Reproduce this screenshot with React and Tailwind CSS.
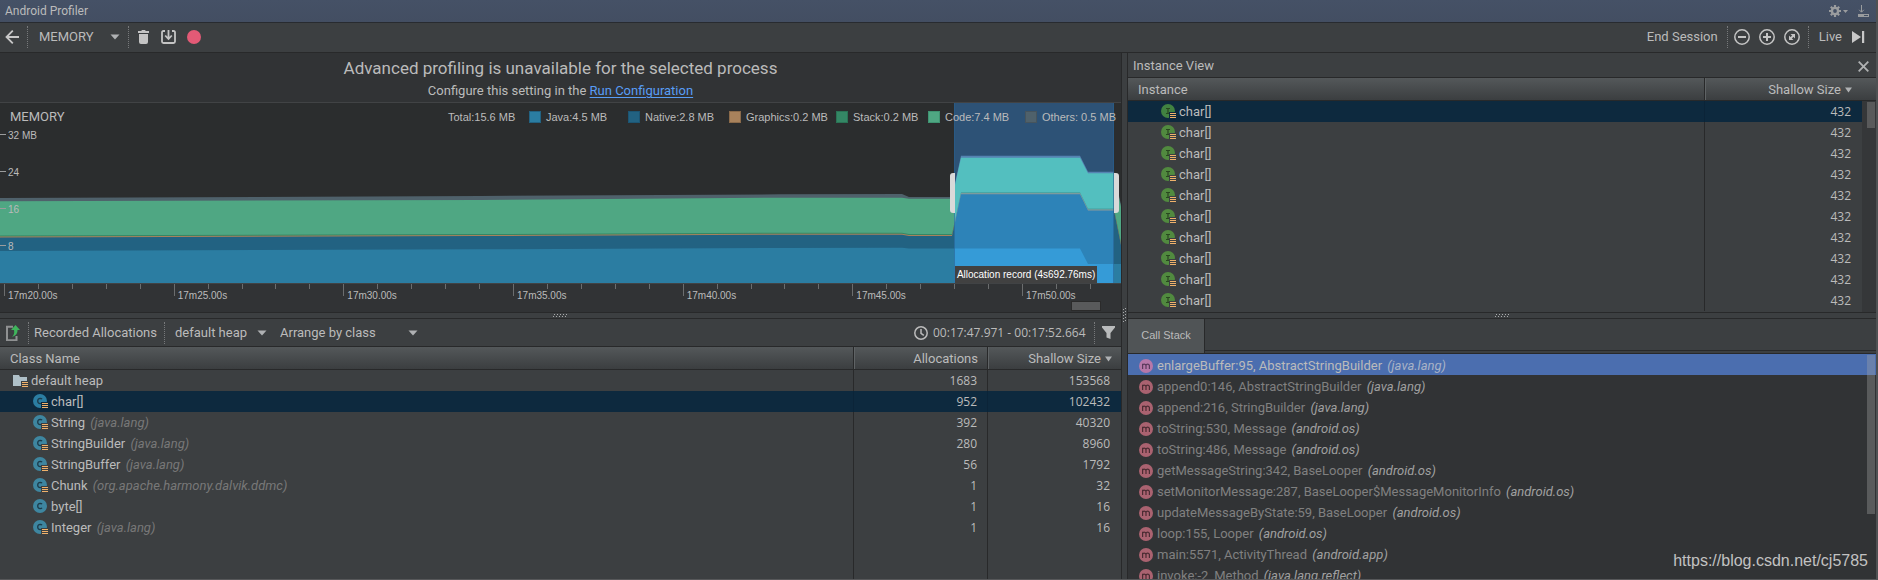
import { useId } from "react";

const HEAP_ROWS = [
  { kind: "heap", name: "default heap", count: 1683, size: 153568 },
  { kind: "class", name: "char[]", count: 952, size: 102432, selected: true, list: true },
  { kind: "class", name: "String", pkg: "(java.lang)", count: 392, size: 40320, list: true },
  { kind: "class", name: "StringBuilder", pkg: "(java.lang)", count: 280, size: 8960, list: true },
  { kind: "class", name: "StringBuffer", pkg: "(java.lang)", count: 56, size: 1792, list: true },
  { kind: "class", name: "Chunk", pkg: "(org.apache.harmony.dalvik.ddmc)", count: 1, size: 32, list: true },
  { kind: "class", name: "byte[]", count: 1, size: 16 },
  { kind: "class", name: "Integer", pkg: "(java.lang)", count: 1, size: 16, list: true },
];

const FRAMES = [
  ["enlargeBuffer:95, AbstractStringBuilder", "(java.lang)"],
  ["append0:146, AbstractStringBuilder", "(java.lang)"],
  ["append:216, StringBuilder", "(java.lang)"],
  ["toString:530, Message", "(android.os)"],
  ["toString:486, Message", "(android.os)"],
  ["getMessageString:342, BaseLooper", "(android.os)"],
  ["setMonitorMessage:287, BaseLooper$MessageMonitorInfo", "(android.os)"],
  ["updateMessageByState:59, BaseLooper", "(android.os)"],
  ["loop:155, Looper", "(android.os)"],
  ["main:5571, ActivityThread", "(android.app)"],
  ["invoke:-2, Method", "(java.lang.reflect)"],
];

const LEGEND = [
  { text: "Java:4.5 MB", width: "w-[99px]", swatch: "bg-[#2b7da2] border-[#226282]" },
  { text: "Native:2.8 MB", width: "w-[101px]", swatch: "bg-[#226282] border-[#1c5573]" },
  { text: "Graphics:0.2 MB", width: "w-[107px]", swatch: "bg-[#a8825c] border-[#8a6a4a]" },
  { text: "Stack:0.2 MB", width: "w-[92px]", swatch: "bg-[#348765] border-[#2a7355]" },
  { text: "Code:7.4 MB", width: "w-[97px]", swatch: "bg-[#4fa783] border-[#3f9472]" },
  { text: "Others: 0.5 MB", width: "w-[88px]", swatch: "bg-[#4f616b] border-[#46545d]" },
];

const TIMES = ["17m20.00s", "17m25.00s", "17m30.00s", "17m35.00s", "17m40.00s", "17m45.00s", "17m50.00s"];

const Caret = () => (
  <svg width="10" height="6" viewBox="0 0 10 6" className="pointer-events-none shrink-0">
    <path d="M0.5 0.5h9L5 5.5z" fill="#afb1b3" />
  </svg>
);

const Dots = () => <span className="h-[22px] shrink-0 border-l border-dotted border-[#77797b]" />;

const Grip = ({ vertical }) => (
  <svg width={vertical ? 4 : 15} height={vertical ? 15 : 4} viewBox={vertical ? "0 0 4 15" : "0 0 15 4"}>
    {[0, 1, 2, 3, 4].map((i) =>
      vertical ? (
        <g key={i} fill="#a8aaab">
          <rect x="2" y={i * 3} width="1" height="1" />
          <rect x="0" y={i * 3 + 1} width="1" height="1" />
        </g>
      ) : (
        <g key={i} fill="#a8aaab">
          <rect x={i * 3 + 1} y="0" width="1" height="1" />
          <rect x={i * 3} y="2" width="1" height="1" />
        </g>
      )
    )}
  </svg>
);

function Drop({ label, value, className }) {
  return (
    <div className={"grid shrink-0 items-center " + className}>
      <select
        aria-label={label}
        defaultValue={value}
        className="col-start-1 row-start-1 h-5 w-full cursor-pointer appearance-none bg-transparent leading-5 text-[#bbbbbb] outline-none"
      >
        <option>{value}</option>
      </select>
      <span className="pointer-events-none col-start-1 row-start-1 justify-self-end">
        <Caret />
      </span>
    </div>
  );
}

function TypeIcon({ letter, list, selected }) {
  const fill = letter === "I" ? (selected ? "#418241" : "#518a3f") : selected ? "#2b7da2" : "#3e86a0";
  return (
    <svg width="15" height="15" viewBox="0 0 15 15" className="shrink-0">
      <circle cx="7" cy="7" r="7" fill={fill} />
      {letter === "I" ? (
        <path d="M5 4h4v1H7.600v4H9v1H5V9h1.400V5H5z" fill="#28471f" />
      ) : (
        <path d="M9 5.2Q8.5 4.4 7.2 4.4Q4.7 4.5 4.7 7T7.2 9.6Q8.5 9.6 9 8.8" stroke="#1c3b4a" strokeWidth="1.3" fill="none" />
      )}
      {list && (
        <>
          <path d="M8 8h7v7H8z" fill={selected ? "#0d293e" : "#3c3f41"} />
          <path d="M9 9.5h6M9 11.5h6M9 13.5h6" stroke="#f0b26b" strokeWidth="1" />
        </>
      )}
    </svg>
  );
}

const HeapIcon = () => (
  <svg width="15" height="14" viewBox="0 0 15 14" className="shrink-0">
    <path d="M0 1h6l1 2h7v9H0z" fill="#afc0c8" />
    <path d="M8 7h7v7H8z" fill="#3c3f41" />
    <path d="M9 8.5h6M9 10.5h6M9 12.5h6" stroke="#f0b26b" strokeWidth="1" />
  </svg>
);

const MethodIcon = ({ selected }) => (
  <svg width="14" height="14" viewBox="0 0 14 14" className="shrink-0">
    <circle cx="7" cy="7" r="7" fill={selected ? "#b678a9" : "#aa6270"} />
    <path
      d="M3.6 10V4.8M3.6 6.3Q3.9 5.2 5.2 5.2T7 6.5V10M7 6.5Q7.2 5.2 8.6 5.2T10.4 6.5V10"
      stroke={selected ? "#5b3a5c" : "#4c2c33"}
      strokeWidth="1.2"
      fill="none"
    />
  </svg>
);

const AREAS = {
  others:
    "M0 95L480 93L780 91.3L902 91L909 94L952 94L961 52.7L1080 52.7L1088 68.7L1114 68.7L1121 102V180H0z",
  code: "M0 98.3L480 97L780 94.7L902 94.7L909 95.7L952 95.7L961 54.7L1080 54.7L1088 70.3L1114 70.3L1121 104V180H0z",
  stack:
    "M0 132.5L480 131L780 129.8L902 129.8L909 131L952 131L961 89.3L1080 89.3L1088 105.6L1114 105.6L1121 140V180H0z",
  graphics:
    "M0 133.5L480 132L780 130.8L902 130.8L909 132L952 132L961 90.3L1080 90.3L1088 106.6L1114 106.6L1121 141V180H0z",
  native:
    "M0 134.5L480 133L780 131.8L902 131.8L909 133L952 133L961 91.3L1080 91.3L1088 107.6L1114 107.6L1121 142V180H0z",
  java: "M0 148L480 146.3L780 145L902 144.7L909 145.5L1080 145.5L1088 161H1121V180H0z",
};

function Areas({ colors }) {
  return ["others", "code", "stack", "graphics", "native", "java"].map((k, i) => (
    <path key={k} d={AREAS[k]} fill={colors[i]} />
  ));
}

function MemoryChart() {
  const clip = useId();
  return (
    <div className="relative h-[180px] overflow-hidden bg-[#2b2d2e]">
      <svg viewBox="0 0 1121 180" preserveAspectRatio="none" className="block h-full w-full">
        <clipPath id={clip}>
          <rect x="954" y="0" width="160" height="180" />
        </clipPath>
        <Areas colors={["#4f616b", "#4fa783", "#348765", "#a8825c", "#226282", "#2b7da2"]} />
        <g clipPath={"url(#" + clip + ")"}>
          <rect x="954" y="0" width="160" height="180" fill="#2d5276" />
          <Areas colors={["#5583b2", "#53bfbf", "#459f9f", "#8f9a9c", "#2d83b8", "#359bd7"]} />
        </g>
        <path d="M954.5 0V180M1113.5 0V180" stroke="#28608f" strokeWidth="1" opacity="0.6" />
        <path d="M955 70v40h-2q-3 0-3-3V73q0-3 3-3zM1114 70v40h2q3 0 3-3V73q0-3-3-3z" fill="#d9d9d9" />
      </svg>
      <div className="absolute inset-x-0 top-0 flex h-7 items-center pl-[10px] pr-[8px]">
        <h2 className="flex-1">MEMORY</h2>
        <div className="flex items-center font-['Liberation_Sans',sans-serif] text-[11px]">
          <span className="w-[81px]">Total:15.6 MB</span>
          {LEGEND.map((l) => (
            <span key={l.text} className={"flex items-center gap-[5px] whitespace-nowrap " + l.width}>
              <i className={"size-3 shrink-0 border " + l.swatch} />
              {l.text}
            </span>
          ))}
        </div>
      </div>
      <div className="absolute left-0 top-[26px] font-['Liberation_Sans',sans-serif] text-[10px] leading-[13px]">
        {["32 MB", "24", "16", "8"].map((t) => (
          <div key={t} className="flex h-[37px] items-start gap-[2px]">
            <i className="mt-[5px] w-[6px] border-t border-[#9a9c9d]" />
            {t}
          </div>
        ))}
      </div>
      <div className="absolute bottom-0 left-[85.2%] flex h-[17px] w-[142px] items-center justify-center whitespace-nowrap bg-[#414141] font-['Liberation_Sans',sans-serif] text-[10px] text-white">
        Allocation record (4s692.76ms)
      </div>
    </div>
  );
}

function TimeAxis() {
  return (
    <div className="relative flex h-[29px] overflow-hidden border-t border-[#414345] bg-[#313335] pl-1 font-['Liberation_Sans',sans-serif] text-[10px]">
      {TIMES.map((t) => (
        <div key={t} className="w-[15.19%] shrink-0">
          <div className="grid h-[5px] grid-cols-5">
            {[0, 1, 2, 3, 4].map((i) => (
              <i key={i} className="border-l border-[#6b6d6e]" />
            ))}
          </div>
          <div className="flex h-[6px] items-center border-l border-[#6b6d6e] pl-[3px] pt-[7px] leading-none">{t}</div>
        </div>
      ))}
      <div className="absolute right-5 top-[17px] h-[10px] w-[30px] border border-[#2b2b2b] bg-[#595a5b]" />
    </div>
  );
}

const HEAD = "h-[23px] border-b border-[#28292a] bg-linear-to-b from-[#54585a] to-[#3b3e40] px-0 pb-0 pt-[2px] font-normal leading-5";

function HeapTable() {
  return (
    <table className="h-full w-full table-fixed border-separate border-spacing-0">
      <colgroup>
        <col />
        <col className="w-[134px]" />
        <col className="w-[134px]" />
      </colgroup>
      <thead>
        <tr className="h-[23px]">
          <th className={HEAD + " text-left"}>
            <span className="pl-[10px]">Class Name</span>
          </th>
          <th className={HEAD + " border-l text-right shadow-[inset_1px_0_0_#5f6365]"}>
            <span className="pr-[9px]">Allocations</span>
          </th>
          <th className={HEAD + " border-l shadow-[inset_1px_0_0_#5f6365]"}>
            <span className="flex items-center justify-end gap-1 pr-[9px]">
              Shallow Size
              <SortMark />
            </span>
          </th>
        </tr>
      </thead>
      <tbody>
        {HEAP_ROWS.map((r) => (
          <tr key={r.name} className={r.selected ? "h-[21px] bg-[#0d293e]" : "h-[21px]"}>
            <td className="h-[21px] p-0">
              <span className={"flex items-center whitespace-nowrap leading-5 " + (r.kind === "heap" ? "gap-[3px] pl-[13px]" : "gap-[3px] pl-[33px]")}>
                {r.kind === "heap" ? <HeapIcon /> : <TypeIcon letter="C" list={r.list} selected={r.selected} />}
                <span>
                  {r.name}
                  {r.pkg && <em className="pl-[2px] text-[#787878]"> {r.pkg}</em>}
                </span>
              </span>
            </td>
            <Num selected={r.selected} className="pr-[10px]">{r.count}</Num>
            <Num selected={r.selected} className="pr-[11px]">{r.size}</Num>
          </tr>
        ))}
        <tr aria-hidden="true">
          <td className="p-0" />
          <td className="border-l border-[#28292a] p-0" />
          <td className="border-l border-[#28292a] p-0" />
        </tr>
      </tbody>
    </table>
  );
}

const Num = ({ selected, className, children }) => (
  <td
    className={
      "h-[21px] border-l py-0 pl-0 text-right font-['Open_Sans',sans-serif] text-[12px] leading-5 " +
      (selected ? "border-[#0b2438] " : "border-[#28292a] ") +
      className
    }
  >
    {children}
  </td>
);

const SortMark = () => (
  <svg width="7" height="6" viewBox="0 0 7 6">
    <path d="M0 0.5h7L3.5 5.5z" fill="#afb1b3" />
  </svg>
);

function InstanceTable() {
  return (
    <div className="flex h-[234px] overflow-hidden">
      <table className="w-full table-fixed self-start border-separate border-spacing-0">
        <colgroup>
          <col />
          <col className="w-[158px]" />
        </colgroup>
        <thead>
          <tr className="h-[23px]">
            <th className={HEAD + " text-left"}>
              <span className="pl-[10px]">Instance</span>
            </th>
            <th className={HEAD + " border-l shadow-[inset_1px_0_0_#5f6365]"}>
              <span className="flex items-center justify-end gap-1 pr-[10px]">
                Shallow Size
                <SortMark />
              </span>
            </th>
          </tr>
        </thead>
        <tbody>
          {Array.from({ length: 10 }, (_, i) => (
            <tr key={i} className={i === 0 ? "bg-[#0d293e]" : ""}>
              <td className="h-[21px] p-0">
                <span className="flex items-center gap-[3px] pl-[33px] leading-5">
                  <TypeIcon letter="I" list selected={i === 0} />
                  char[]
                </span>
              </td>
              <Num selected={i === 0} className="pr-[11px]">432</Num>
            </tr>
          ))}
        </tbody>
      </table>
      <div className="w-[14px] shrink-0">
        <div className={HEAD} />
        <div className="flex h-[211px] justify-end bg-[#353739] pr-px pt-px">
          <div className="h-[26px] w-2 bg-[#595a5b]" />
        </div>
      </div>
    </div>
  );
}

export default function App() {
  return (
    <div className="flex h-screen min-h-[560px] flex-col overflow-hidden border-b border-r-2 border-b-[#57585a] border-r-[#4f5153] bg-[#3c3f41] font-[Roboto,'Noto_Sans',sans-serif] text-[13px] text-[#bbbbbb]">
      <header className="flex h-[23px] shrink-0 items-center border-b border-[#282b30] bg-linear-to-b from-[#455166] to-[#434e62] pl-[5px] pr-[7px] text-[12px]">
        <h1 className="flex-1">Android Profiler</h1>
        <button aria-label="Settings" className="flex items-center gap-[2px]">
          <svg width="12" height="12" viewBox="0 0 12 12">
            <path d="M6 0V12M0 6H12M1.8 1.8L10.2 10.2M10.2 1.8L1.8 10.2" stroke="#9a9c9e" strokeWidth="2.2" />
            <circle cx="6" cy="6" r="3.1" fill="none" stroke="#9a9c9e" strokeWidth="2.4" />
            <circle cx="6" cy="6" r="1.9" fill="#445064" />
          </svg>
          <svg width="5" height="3" viewBox="0 0 5 3">
            <path d="M0 0h5L2.5 3z" fill="#9a9c9e" />
          </svg>
        </button>
        <button aria-label="Hide" className="ml-[10px]">
          <svg width="11" height="12" viewBox="0 0 11 12">
            <path d="M3.5 0V7M1.2 4.8L3.5 7.2L5.8 4.8" fill="none" stroke="#9a9c9e" />
            <path d="M0 9h11v3H0z" fill="#9a9c9e" />
            <path d="M6 10h4v1H6z" fill="#445064" />
          </svg>
        </button>
      </header>

      <div className="flex h-[30px] shrink-0 items-center border-b border-[#28292a] pb-[2px] pl-[5px] pr-[11px]">
        <button aria-label="Back">
          <svg width="14" height="14" viewBox="0 0 14 14">
            <path d="M14 7H1.5M7.800 0.7L1.5 7L7.800 13.3" fill="none" stroke="#c8c8c8" strokeWidth="1.8" />
          </svg>
        </button>
        <span className="ml-2 flex"><Dots /></span>
        <Drop label="Profiler stage" value="MEMORY" className="ml-[11px] w-[81px]" />
        <span className="ml-2 flex"><Dots /></span>
        <button aria-label="Force garbage collection" className="ml-[9px]">
          <svg width="11" height="14" viewBox="0 0 11 14">
            <path d="M0 1h3.2L4 0h3l0.8 1H11v2H0zM1 4h9v8q0 2-2 2H3q-2 0-2-2z" fill="#c4c4c4" />
          </svg>
        </button>
        <button aria-label="Dump heap" className="ml-3">
          <svg width="15" height="14" viewBox="0 0 15 14">
            <path d="M4 1H2.5Q1 1 1 2.5v9Q1 13 2.5 13h10q1.500 0 1.500-1.500v-9Q14 1 12.500 1H11" fill="none" stroke="#c4c4c4" strokeWidth="1.8" />
            <path d="M7.500 0V8.500M4.200 5.500L7.500 9L10.800 5.500" fill="none" stroke="#c4c4c4" strokeWidth="1.800" />
          </svg>
        </button>
        <button aria-label="Record" className="ml-[11px] size-[14px] rounded-full bg-[#e35a76]" />
        <span className="flex-1" />
        <button>End Session</button>
        <span className="ml-[9px] flex"><Dots /></span>
        <div className="ml-[6px] flex gap-[9px]">
          <button aria-label="Zoom out">
            <svg width="16" height="16" viewBox="0 0 16 16" fill="none" stroke="#c4c4c4">
              <circle cx="8" cy="8" r="7.200" strokeWidth="1.500" />
              <path d="M4 8h8" strokeWidth="2" />
            </svg>
          </button>
          <button aria-label="Zoom in">
            <svg width="16" height="16" viewBox="0 0 16 16" fill="none" stroke="#c4c4c4">
              <circle cx="8" cy="8" r="7.200" strokeWidth="1.500" />
              <path d="M4 8h8M8 4v8" strokeWidth="2" />
            </svg>
          </button>
          <button aria-label="Reset zoom">
            <svg width="16" height="16" viewBox="0 0 16 16" fill="none" stroke="#c4c4c4">
              <circle cx="8" cy="8" r="7.200" strokeWidth="1.500" />
              <path d="M6.500 5H11v4.500zM5 6.500V11h4.500z" fill="#c4c4c4" stroke="none" />
              <path d="M6 10l4-4" strokeWidth="1.800" />
            </svg>
          </button>
        </div>
        <span className="ml-2 flex"><Dots /></span>
        <button className="ml-[10px] flex items-center gap-[10px]">
          Live
          <svg width="13" height="12" viewBox="0 0 13 12" fill="#c8c8c8">
            <path d="M0 0L9 6L0 12zM10 0h2.200v12H10z" />
          </svg>
        </button>
      </div>

      <main className="grid min-h-0 flex-1 grid-cols-[1121fr_7px_748fr] grid-rows-[minmax(0,1fr)]">
        <section className="flex min-h-0 min-w-0 flex-col">
          <div className="h-[50px] shrink-0 border-b border-[#414345] bg-[#313335] pt-[3px] text-center">
            <p className="text-[17px] leading-6">Advanced profiling is unavailable for the selected process</p>
            <p className="leading-[22px]">
              Configure this setting in the{" "}
              <a href="#run-configuration" className="text-[#589df6] underline underline-offset-2">
                Run Configuration
              </a>
            </p>
          </div>
          <div className="shrink-0">
            <MemoryChart />
            <TimeAxis />
          </div>
          <div className="flex h-[7px] shrink-0 items-center justify-center border-y border-[#28292a]">
            <Grip />
          </div>
          <div className="flex h-[28px] shrink-0 items-center border-b border-[#28292a] pl-[6px] pr-[6px]">
            <button aria-label="Export recording">
              <svg width="15" height="16" viewBox="0 0 15 16">
                <path d="M7 1.800H1v13.400h9.500V11" fill="none" stroke="#8f9192" strokeWidth="2" />
                <path d="M9.500 0L14 5h-2.500Q12 10 6 12Q9 9 8 5H5z" fill="#3fb55c" />
              </svg>
            </button>
            <span className="ml-[7px] flex"><Dots /></span>
            <span className="ml-[5px] w-[130px]">Recorded Allocations</span>
            <Dots />
            <Drop label="Heap" value="default heap" className="ml-[10px] w-[92px]" />
            <Drop label="Arrangement" value="Arrange by class" className="ml-[13px] w-[138px]" />
            <span className="flex-1" />
            <span className="flex items-center gap-[5px] whitespace-nowrap">
              <svg width="14" height="14" viewBox="0 0 14 14" fill="none" stroke="#bbbbbb" strokeWidth="1.500">
                <circle cx="7" cy="7" r="6.200" />
                <path d="M7 3V7.300L9.800 9.300" />
              </svg>
              <time className="w-[155px] text-[12px] font-['Open_Sans',sans-serif]">00:17:47.971 - 00:17:52.664</time>
            </span>
            <span className="ml-[6px] flex"><Dots /></span>
            <button aria-label="Filter" className="ml-[7px]">
              <svg width="13" height="13" viewBox="0 0 13 13">
                <path d="M0 0h13v1.500L8.500 7v6l-4-1.500V7L0 1.500z" fill="#b9bbbc" />
              </svg>
            </button>
          </div>
          <div className="min-h-0 flex-1 overflow-hidden">
            <HeapTable />
          </div>
        </section>

        <div className="flex items-start justify-center border-x border-[#28292a] pt-[255px]">
          <Grip vertical />
        </div>

        <section className="flex min-h-0 min-w-0 flex-col">
          <div className="flex h-[25px] shrink-0 items-center justify-between border-b border-[#28292a] pl-[5px] pr-[7px] pt-[2px]">
            <h2>Instance View</h2>
            <button aria-label="Close">
              <svg width="11" height="11" viewBox="0 0 11 11">
                <path d="M0.700 0.700L10.300 10.300M10.300 0.700L0.700 10.300" stroke="#b0b2b3" strokeWidth="1.800" />
              </svg>
            </button>
          </div>
          <InstanceTable />
          <div className="flex h-[7px] shrink-0 items-center justify-center border-y border-[#28292a]">
            <Grip />
          </div>
          <div className="flex h-[35px] shrink-0 border-b border-[#28292a]" role="tablist">
            <button
              role="tab"
              aria-selected="true"
              className="w-[77px] border-r border-[#28292a] bg-[#505456] pb-[2px] font-['Liberation_Sans',sans-serif] text-[11px]"
            >
              Call Stack
            </button>
            <div className="h-[32px] flex-1 border-b border-[#28292a]" />
          </div>
          <div className="relative min-h-0 flex-1 overflow-hidden bg-[#313335]">
            <ul>
              {FRAMES.map(([frame, pkg], i) => (
                <li
                  key={frame}
                  className={
                    "flex h-[21px] items-center gap-1 whitespace-nowrap pl-[11px] pt-[2px] " +
                    (i === 0 ? "bg-[#4b6eaf]" : "text-[#808080]")
                  }
                >
                  <MethodIcon selected={i === 0} />
                  <span>
                    {frame} <em className={i === 0 ? "pl-[2px] text-[#a9b3c6]" : "pl-[2px] text-[#a0a0a0]"}>{pkg}</em>
                  </span>
                </li>
              ))}
            </ul>
            <div className="absolute right-px top-px h-[159px] w-2 bg-[#a6a6a6]/35" />
            <p className="absolute bottom-1 right-2 font-['Liberation_Sans',sans-serif] text-[16px] leading-7 text-[#c2c2c2]">
              https://blog.csdn.net/cj5785
            </p>
          </div>
        </section>
      </main>
    </div>
  );
}
